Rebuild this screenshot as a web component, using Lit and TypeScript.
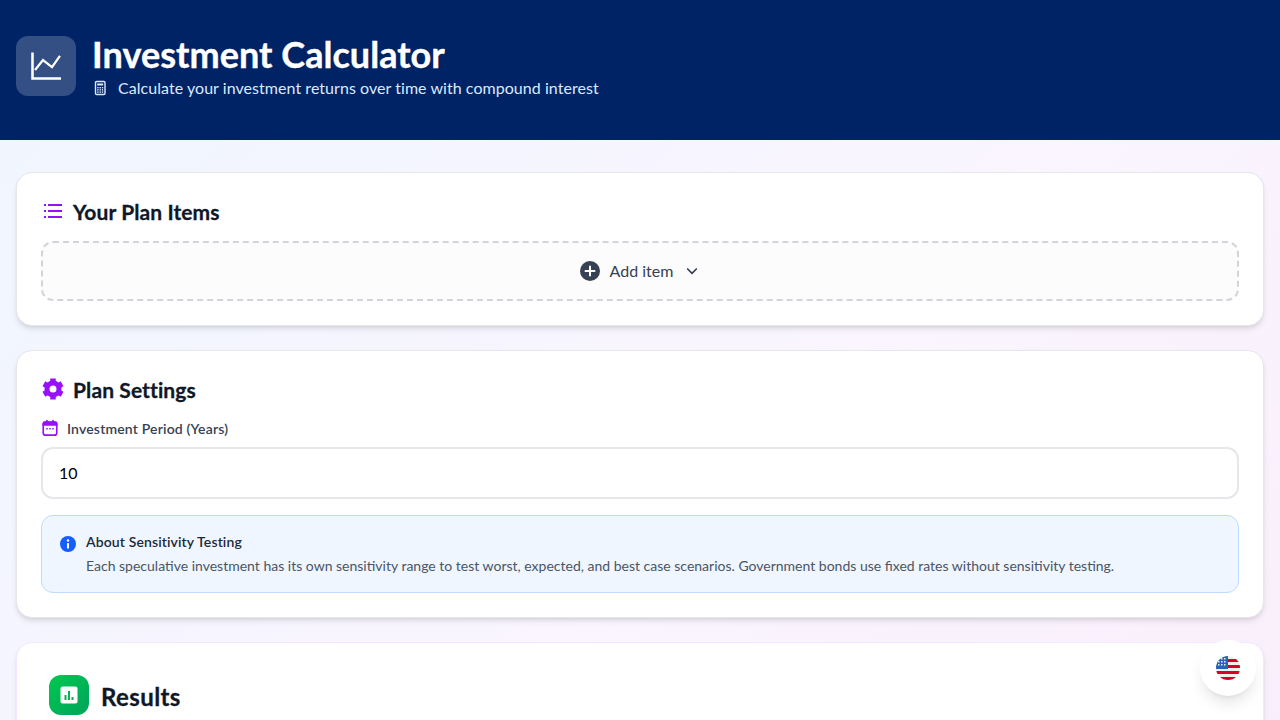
import { LitElement, css, html, svg } from 'lit'
import { customElement } from 'lit/decorators.js'

@customElement('app-root')
export class AppRoot extends LitElement {
  static styles = css`
    :host {
      display: block;
      min-height: 100vh;
      font-family: 'Lato', sans-serif;
      color: #101828;
      background: linear-gradient(135deg, #eff6ff 0%, #faf5ff 60%, #f9effc 100%) fixed;
    }
    * {
      box-sizing: border-box;
    }
    .header {
      height: 140px;
      background: #002366;
      padding: 36px 16px 0;
      display: flex;
      align-items: flex-start;
      gap: 16px;
      color: #fff;
    }
    .logo {
      width: 60px;
      height: 60px;
      border-radius: 12px;
      background: rgba(255, 255, 255, 0.2);
      display: flex;
      align-items: center;
      justify-content: center;
    }
    .logo svg {
      width: 36px;
      height: 36px;
    }
    .head-text {
      margin-top: -2px;
    }
    h1 {
      margin: 0;
      font-size: 36px;
      line-height: 40px;
      font-weight: 700;
      letter-spacing: 0.05px;
      -webkit-text-stroke: 0.4px #fff;
    }
    .tagline {
      display: flex;
      align-items: center;
      gap: 10px;
      margin-top: 2px;
      font-size: 16px;
      line-height: 24px;
      letter-spacing: 0.05px;
      color: #dbeafe;
    }
    .tagline svg {
      width: 16px;
      height: 16px;
    }
    main {
      padding: 32px 16px;
      display: flex;
      flex-direction: column;
      gap: 24px;
    }
    .card {
      background: #fff;
      border: 1px solid #e5e7eb;
      border-radius: 16px;
      padding: 24px;
      box-shadow: 0 4px 6px -1px rgba(0, 0, 0, 0.1), 0 2px 4px -2px rgba(0, 0, 0, 0.1);
    }
    .title {
      display: flex;
      align-items: center;
      gap: 8px;
      height: 28px;
      margin: 0 0 16px;
      font-size: 21px;
      line-height: 28px;
      font-weight: 700;
      letter-spacing: 0.1px;
      -webkit-text-stroke: 0.3px #101828;
    }
    .title span {
      margin-top: 2px;
    }
    .title svg {
      width: 24px;
      height: 24px;
    }
    .add {
      height: 60px;
      border: 2px dashed #d1d5db;
      border-radius: 12px;
      background: #fcfcfc;
      display: flex;
      align-items: center;
      justify-content: center;
      gap: 10px;
      font-size: 16px;
      color: #364153;
    }
    .add span {
      margin-bottom: 2px;
    }
    .add .plus {
      width: 20px;
      height: 20px;
    }
    .add .chev {
      width: 16px;
      height: 16px;
      margin-left: 1px;
    }
    .label {
      display: flex;
      align-items: center;
      gap: 8px;
      height: 20px;
      margin-bottom: 8px;
      padding-bottom: 2px;
      font-size: 14px;
      font-weight: 600;
      letter-spacing: 0.17px;
      color: #364153;
    }
    .label svg {
      width: 18px;
      height: 18px;
    }
    .input {
      height: 52px;
      border: 2px solid #e5e7eb;
      border-radius: 12px;
      padding: 0 16px 2px;
      display: flex;
      align-items: center;
      font-size: 16px;
      color: #000;
    }
    .info {
      margin-top: 16px;
      height: 78px;
      border: 1px solid #bedbff;
      border-radius: 12px;
      background: #eff6ff;
      padding: 16px;
      display: flex;
      gap: 8px;
    }
    .info svg {
      width: 20px;
      height: 20px;
      margin-top: 2px;
      flex: none;
    }
    .info h4 {
      margin: 0 0 4px;
      font-size: 14px;
      line-height: 20px;
      font-weight: 600;
      letter-spacing: 0.12px;
      color: #1e2939;
    }
    .info p {
      margin: 0;
      font-size: 14px;
      line-height: 20px;
      color: #4a5565;
    }
    .results {
      padding: 32px;
      height: 300px;
      border-color: #f3e8ff;
    }
    .results-head {
      display: flex;
      align-items: center;
      gap: 12px;
      font-size: 24px;
      line-height: 32px;
      font-weight: 700;
      letter-spacing: 0.4px;
      -webkit-text-stroke: 0.3px #101828;
    }
    .results-head span {
      margin-top: 4px;
    }
    .badge {
      width: 40px;
      height: 40px;
      border-radius: 12px;
      background: linear-gradient(135deg, #00c950, #00a35b);
      display: flex;
      align-items: center;
      justify-content: center;
    }
    .badge svg {
      width: 20px;
      height: 20px;
    }
    .lang {
      position: fixed;
      right: 24px;
      bottom: 24px;
      width: 56px;
      height: 56px;
      border-radius: 50%;
      background: #fff;
      box-shadow: 0 10px 15px -3px rgba(0, 0, 0, 0.1), 0 4px 6px -4px rgba(0, 0, 0, 0.1);
      display: flex;
      align-items: center;
      justify-content: center;
    }
    .lang svg {
      width: 24px;
      height: 24px;
    }
  `

  render() {
    return html`
      <header class="header">
        <div class="logo">
          <svg viewBox="0 0 24 24" fill="none" stroke="#fff" stroke-width="1.5">
            <path d="M3 3v17.3h19" stroke-width="1.7" />
            <path d="M4.7 14.7L10 8l6 4.7 5.3-7.4" />
          </svg>
        </div>
        <div class="head-text">
          <h1>Investment Calculator</h1>
          <div class="tagline">
            <svg viewBox="0 0 16 16">
              <rect x="3.5" y="1.5" width="9.5" height="13" rx="1.2" fill="none" stroke="#dbeafe" stroke-width="1.4" />
              <rect x="5.2" y="3.5" width="6" height="2" fill="#dbeafe" />
              ${[7, 9.2, 11.4].map((y) =>
                [5.2, 7.5, 9.8].map(
                  (x) => svg`<rect x=${x} y=${y} width="1.4" height="1.4" fill="#dbeafe" />`
                )
              )}
            </svg>
            Calculate your investment returns over time with compound interest
          </div>
        </div>
      </header>
      <main>
        <section class="card">
          <h2 class="title">
            <svg viewBox="0 0 24 24" fill="none" stroke="#9810fa" stroke-width="2">
              <path d="M7 6h14M7 12h14M7 18h14M3 6h2M3 12h2M3 18h2" />
            </svg>
            <span>Your Plan Items</span>
          </h2>
          <div class="add">
            <svg class="plus" viewBox="0 0 20 20">
              <circle cx="10" cy="10" r="10" fill="#364153" />
              <path d="M10 5.5v9M5.5 10h9" stroke="#fff" stroke-width="2" stroke-linecap="round" />
            </svg>
            <span>Add item</span>
            <svg class="chev" viewBox="0 0 24 24" fill="none" stroke="#364153" stroke-width="2.5" stroke-linecap="round" stroke-linejoin="round">
              <path d="M5.5 9l6.5 6.5L18.500 9" />
            </svg>
          </div>
        </section>
        <section class="card">
          <h2 class="title">
            <svg viewBox="0 0 24 24" fill="none">
              <circle cx="12" cy="12" r="6" stroke="#9810fa" stroke-width="5" />
              ${[0, 60, 120].map(
                (a) => svg`<path d="M12 1.500v21" stroke="#9810fa" stroke-width="5.500" stroke-linejoin="round" transform="rotate(${a} 12 12)" />`
              )}
              <circle cx="12" cy="12" r="3.500" fill="#fff" />
            </svg>
            <span>Plan Settings</span>
          </h2>
          <div class="label">
            <svg viewBox="0 0 24 24" fill="none" stroke="#9810fa" stroke-width="2.2">
              <rect x="3" y="4.5" width="18" height="17" rx="3" />
              <path d="M3 8h18V6a2 2 0 0 0-2-2H5a2 2 0 0 0-2 2z" fill="#9810fa" />
              <path d="M8 2v3M16 2v3" stroke-linecap="round" />
              <path d="M7 13h2M11 13h2M15 13h2" />
            </svg>
            Investment Period (Years)
          </div>
          <div class="input">10</div>
          <div class="info">
            <svg viewBox="0 0 20 20">
              <circle cx="10" cy="10" r="8" fill="#155dfc" />
              <rect x="9" y="9" width="2" height="5.5" rx="0.5" fill="#fff" />
              <circle cx="10" cy="6.5" r="1.2" fill="#fff" />
            </svg>
            <div>
              <h4>About Sensitivity Testing</h4>
              <p>Each speculative investment has its own sensitivity range to test worst, expected, and best case scenarios. Government bonds use fixed rates without sensitivity testing.</p>
            </div>
          </div>
        </section>
        <section class="card results">
          <div class="results-head">
            <div class="badge">
              <svg viewBox="0 0 20 20">
                <rect x="1.5" y="1.5" width="17" height="17" rx="2" fill="#fff" />
                <path d="M6.5 10v5M10 6v9M13.5 12v3" stroke="#00b556" stroke-width="2" />
              </svg>
            </div>
            <span>Results</span>
          </div>
        </section>
      </main>
      <div class="lang">
        <svg viewBox="0 0 24 24">
          <defs>
            <clipPath id="flag"><circle cx="12" cy="12" r="12" /></clipPath>
          </defs>
          <g clip-path="url(#flag)">
            <rect width="24" height="24" fill="#eeeeee" />
            <path d="M12 3h12v3H12zM12 9h12v3H12zM0 15h24v3H0zM0 21h24v3H0z" fill="#d80027" />
            <rect width="12" height="13" fill="#2b62b8" />
            ${[2, 5, 8].map((y) =>
              [2, 5, 8].map(
                (x) => svg`<rect x=${x} y=${y} width="1.5" height="1.5" fill="#eeeeee" />`
              )
            )}
          </g>
        </svg>
      </div>
    `
  }
}
